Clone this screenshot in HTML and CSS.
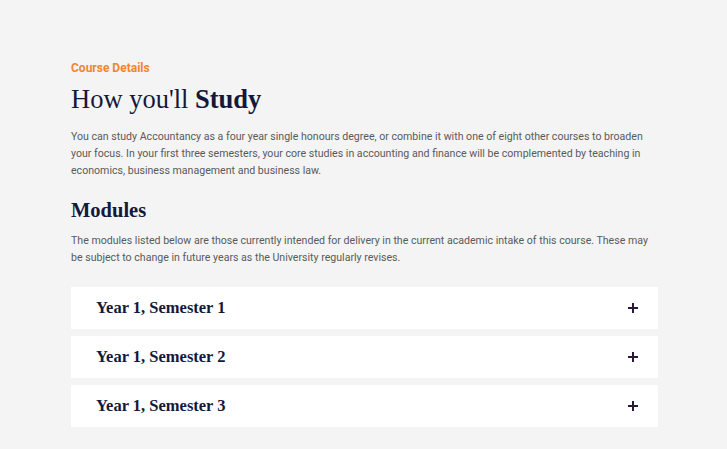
FILE: index.html
```html
<!DOCTYPE html>
<html lang="en">
<head>
<meta charset="utf-8">
<title>Course Details</title>
<link rel="stylesheet" href="styles.css">
</head>
<body>
<main class="section">
  <p class="eyebrow">Course Details</p>
  <h1 class="title">How you'll <strong>Study</strong></h1>
  <p class="text">You can study Accountancy as a four year single honours degree, or combine it with one of eight other courses to broaden your focus. In your first three semesters, your core studies in accounting and finance will be complemented by teaching in economics, business management and business law.</p>
  <h2 class="subtitle">Modules</h2>
  <p class="text">The modules listed below are those currently intended for delivery in the current academic intake of this course. These may be subject to change in future years as the University regularly revises.</p>
  <div class="accordion">
    <div class="item"><span class="item-title">Year 1, Semester 1</span><span class="plus"></span></div>
    <div class="item"><span class="item-title">Year 1, Semester 2</span><span class="plus"></span></div>
    <div class="item"><span class="item-title">Year 1, Semester 3</span><span class="plus"></span></div>
  </div>
</main>
</body>
</html>
```
FILE: styles.css
```css
html, body { margin: 0; padding: 0; }
body {
  background: #f4f4f4;
  font-family: Roboto, "Liberation Sans", sans-serif;
  width: 727px;
  height: 449px;
  overflow: hidden;
}
.section {
  width: 587px;
  margin-left: 71px;
  padding-top: 60px;
}
.eyebrow {
  margin: 0;
  color: #f0862e;
  font-weight: 700;
  font-size: 12px;
  line-height: 16px;
}
.title {
  margin: 6px 0 0;
  font-family: "Liberation Serif", "DejaVu Serif", serif;
  font-weight: 400;
  font-size: 26.5px;
  line-height: 34px;
  color: #13193a;
}
.title strong { font-weight: 700; }
.text {
  margin: 0;
  color: #5a5a5a;
  font-size: 10.6px;
  line-height: 17px;
}
.title + .text { margin-top: 12px; }
.subtitle {
  margin: 17px 0 8px;
  font-family: "Liberation Serif", "DejaVu Serif", serif;
  font-weight: 700;
  font-size: 20.5px;
  line-height: 28px;
  color: #13193a;
}
.accordion {
  margin-top: 21px;
  display: flex;
  flex-direction: column;
  gap: 7px;
}
.item {
  background: #fff;
  height: 42px;
  display: flex;
  align-items: center;
  justify-content: space-between;
  padding: 0 20px 0 25px;
}
.item-title {
  font-family: "Liberation Serif", "DejaVu Serif", serif;
  font-weight: 700;
  font-size: 16.5px;
  color: #13193a;
}
.plus {
  position: relative;
  width: 10px;
  height: 10px;
}
.plus::before, .plus::after {
  content: "";
  position: absolute;
  background: #2a1a34;
}
.plus::before { left: 0; right: 0; top: 4px; height: 2px; }
.plus::after { top: 0; bottom: 0; left: 4px; width: 2px; }
```
